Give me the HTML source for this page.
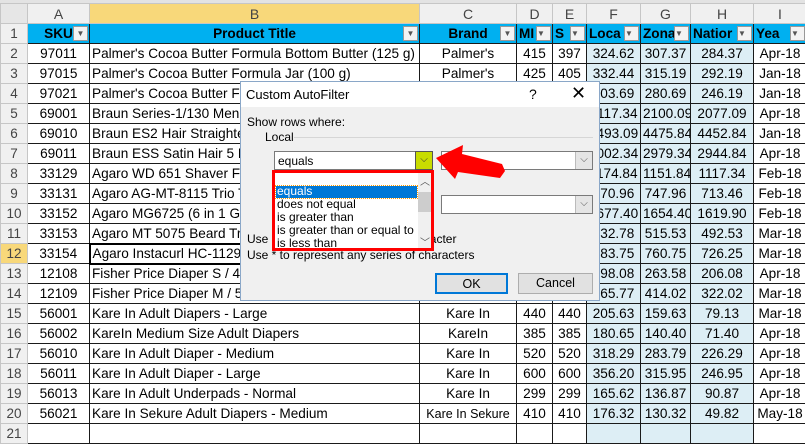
<!DOCTYPE html>
<html><head><meta charset="utf-8"><style>
*{margin:0;padding:0;box-sizing:border-box}
body{width:805px;height:425px;overflow:hidden;background:#fff;font-family:"Liberation Sans",sans-serif;position:relative}
table{border-collapse:collapse;table-layout:fixed;position:absolute;left:0;top:3px;width:806px}
td{height:20px;border:1px solid #1a1a1a;font-size:13.6px;text-align:center;white-space:nowrap;overflow:hidden;padding:0 2px;color:#000}
tr.ch td{height:20px;background:#f0f0f0;border:1px solid #c6c6c6;color:#444;font-size:14px}
td.rh{background:#f0f0f0;border:1px solid #c6c6c6;color:#444;font-size:13.5px}
td.rhs{background:#f8d87a}
tr.h td{background:#00b0f0;font-weight:bold;position:relative}
tr.h td.rh{background:#f0f0f0;font-weight:normal}
.f{background:#ddeef5}
td.l{text-align:left}
.dd{position:absolute;right:1px;top:2px;width:15px;height:15px;background:#f3f3f3;border:1px solid #999;font-size:8px;line-height:13px;color:#555;font-weight:normal}
.dlg{position:absolute;left:240px;top:81px;width:360px;height:220px;background:#f0f0f0;border:1px solid #8aa7c8;font-size:12px;color:#000}
.tb{height:25px;background:#fff;position:relative}
.ab{position:absolute}
.cb{position:absolute;background:#fff;border:1px solid #7a7a7a;height:19px}
.cbb{position:absolute;right:0;top:0;width:17px;height:17px;border-left:1px solid #bbb;background:#e5e5e5;font-size:10px;color:#555;text-align:center;line-height:16px}
.btn{position:absolute;height:21px;background:#e1e1e1;border:1px solid #adadad;text-align:center;line-height:19px;font-size:12.5px}
</style></head><body>
<div style="position:absolute;left:0;top:0;width:805px;height:3px;background:#e3e3e3"></div>
<table>
<colgroup><col style="width:27px"><col style="width:62px"><col style="width:330px"><col style="width:97px"><col style="width:36px"><col style="width:34px"><col style="width:54px"><col style="width:50px"><col style="width:63px"><col style="width:53px"></colgroup>
<tr class="ch"><td style="background:#e6e6e6"></td><td>A</td><td style="background:#f8d87a">B</td><td>C</td><td>D</td><td>E</td><td>F</td><td>G</td><td>H</td><td>I</td></tr>
<tr class="h"><td class="rh">1</td><td>SKU<span class="dd">▼</span></td><td>Product Title<span class="dd">▼</span></td><td>Brand<span class="dd">▼</span></td><td class="l">MI<span class="dd">▼</span></td><td class="l">S<span class="dd">▼</span></td><td class="l">Loca<span class="dd">▼</span></td><td class="l">Zona<span class="dd">▼</span></td><td class="l">Natior<span class="dd">▼</span></td><td class="l">Yea<span class="dd">▼</span></td></tr>
<tr><td class="rh">2</td><td>97011</td><td class="l">Palmer's Cocoa Butter Formula Bottom Butter (125 g)</td><td>Palmer's</td><td>415</td><td>397</td><td class="f">324.62</td><td class="f">307.37</td><td class="f">284.37</td><td>Apr-18</td></tr>
<tr><td class="rh">3</td><td>97015</td><td class="l">Palmer's Cocoa Butter Formula Jar (100 g)</td><td>Palmer's</td><td>425</td><td>405</td><td class="f">332.44</td><td class="f">315.19</td><td class="f">292.19</td><td>Jan-18</td></tr>
<tr><td class="rh">4</td><td>97021</td><td class="l">Palmer's Cocoa Butter Formula Lotion</td><td>Palmer's</td><td>350</td><td>330</td><td class="f">303.69</td><td class="f">280.69</td><td class="f">246.19</td><td>Jan-18</td></tr>
<tr><td class="rh">5</td><td>69001</td><td class="l">Braun Series-1/130 Men's Shaver</td><td>Braun</td><td>2200</td><td>2150</td><td class="f">2117.34</td><td class="f">2100.09</td><td class="f">2077.09</td><td>Apr-18</td></tr>
<tr><td class="rh">6</td><td>69010</td><td class="l">Braun ES2 Hair Straightener</td><td>Braun</td><td>4600</td><td>4550</td><td class="f">4493.09</td><td class="f">4475.84</td><td class="f">4452.84</td><td>Jan-18</td></tr>
<tr><td class="rh">7</td><td>69011</td><td class="l">Braun ESS Satin Hair 5 Hair Dryer</td><td>Braun</td><td>3100</td><td>3050</td><td class="f">3002.34</td><td class="f">2979.34</td><td class="f">2944.84</td><td>Apr-18</td></tr>
<tr><td class="rh">8</td><td>33129</td><td class="l">Agaro WD 651 Shaver For Men</td><td>Agaro</td><td>1200</td><td>1190</td><td class="f">1174.84</td><td class="f">1151.84</td><td class="f">1117.34</td><td>Feb-18</td></tr>
<tr><td class="rh">9</td><td>33131</td><td class="l">Agaro AG-MT-8115 Trio Trimmer</td><td>Agaro</td><td>800</td><td>790</td><td class="f">770.96</td><td class="f">747.96</td><td class="f">713.46</td><td>Feb-18</td></tr>
<tr><td class="rh">10</td><td>33152</td><td class="l">Agaro MG6725 (6 in 1 Grooming Kit)</td><td>Agaro</td><td>1700</td><td>1690</td><td class="f">1677.40</td><td class="f">1654.40</td><td class="f">1619.90</td><td>Feb-18</td></tr>
<tr><td class="rh">11</td><td>33153</td><td class="l">Agaro MT 5075 Beard Trimmer</td><td>Agaro</td><td>560</td><td>550</td><td class="f">532.78</td><td class="f">515.53</td><td class="f">492.53</td><td>Mar-18</td></tr>
<tr><td class="rh rhs">12</td><td>33154</td><td class="l" style="border:2px solid #000">Agaro Instacurl HC-1129</td><td>Agaro</td><td>800</td><td>790</td><td class="f">783.75</td><td class="f">760.75</td><td class="f">726.25</td><td>Mar-18</td></tr>
<tr><td class="rh">13</td><td>12108</td><td class="l">Fisher Price Diaper S / 40</td><td>Fisher Price</td><td>320</td><td>310</td><td class="f">298.08</td><td class="f">263.58</td><td class="f">206.08</td><td>Apr-18</td></tr>
<tr><td class="rh">14</td><td>12109</td><td class="l">Fisher Price Diaper M / 50</td><td>Fisher Price</td><td>480</td><td>470</td><td class="f">465.77</td><td class="f">414.02</td><td class="f">322.02</td><td>Mar-18</td></tr>
<tr><td class="rh">15</td><td>56001</td><td class="l">Kare In Adult Diapers - Large</td><td>Kare In</td><td>440</td><td>440</td><td class="f">205.63</td><td class="f">159.63</td><td class="f">79.13</td><td>Mar-18</td></tr>
<tr><td class="rh">16</td><td>56002</td><td class="l">KareIn Medium Size Adult Diapers</td><td>KareIn</td><td>385</td><td>385</td><td class="f">180.65</td><td class="f">140.40</td><td class="f">71.40</td><td>Apr-18</td></tr>
<tr><td class="rh">17</td><td>56010</td><td class="l">Kare In Adult Diaper - Medium</td><td>Kare In</td><td>520</td><td>520</td><td class="f">318.29</td><td class="f">283.79</td><td class="f">226.29</td><td>Apr-18</td></tr>
<tr><td class="rh">18</td><td>56011</td><td class="l">Kare In Adult Diaper - Large</td><td>Kare In</td><td>600</td><td>600</td><td class="f">356.20</td><td class="f">315.95</td><td class="f">246.95</td><td>Apr-18</td></tr>
<tr><td class="rh">19</td><td>56013</td><td class="l">Kare In Adult Underpads - Normal</td><td>Kare In</td><td>299</td><td>299</td><td class="f">165.62</td><td class="f">136.87</td><td class="f">90.87</td><td>Apr-18</td></tr>
<tr><td class="rh">20</td><td>56021</td><td class="l">Kare In Sekure Adult Diapers - Medium</td><td style="font-size:12.5px">Kare In Sekure</td><td>410</td><td>410</td><td class="f">176.32</td><td class="f">130.32</td><td class="f">49.82</td><td>May-18</td></tr>
<tr><td class="rh">21</td><td></td><td></td><td></td><td></td><td></td><td class="f"></td><td class="f"></td><td class="f"></td><td></td></tr>
</table>

<div class="dlg">
 <div class="tb"><span class="ab" style="left:5px;top:5px;font-size:13px">Custom AutoFilter</span><span class="ab" style="left:288px;top:4px;font-size:14px">?</span><span class="ab" style="left:330px;top:1px;font-size:18px;font-weight:300">✕</span></div>
 <span class="ab" style="left:6px;top:33px">Show rows where:</span>
 <span class="ab" style="left:24px;top:48px">Local</span>
 <div class="ab" style="left:53px;top:55px;width:299px;height:1px;background:#d6d6d6"></div>
 <div class="cb" style="left:33px;top:69px;width:159px"><span class="ab" style="left:3px;top:2px">equals</span><div class="cbb" style="background:#c8dc00;border:1px solid #555;top:-1px;right:-1px;width:18px;height:19px;color:#333">⌵</div></div>
 <div class="cb" style="left:200px;top:69px;width:152px"><div class="cbb">⌵</div></div>
 <div class="cb" style="left:200px;top:113px;width:152px"><div class="cbb">⌵</div></div>
 <span class="ab" style="left:6px;top:150px">Use ? to represent any single character</span>
 <span class="ab" style="left:6px;top:166px">Use * to represent any series of characters</span>
 <div class="ab" style="left:31px;top:88px;width:162px;height:81px;border:3px solid #f00;background:#fff">
  <div class="ab" style="left:143px;top:0;width:13px;height:75px;background:#f0f0f0"></div>
  <div class="ab" style="left:143px;top:19px;width:13px;height:20px;background:#cdcdcd"></div>
  <span class="ab" style="left:145px;top:0;font-size:10px;color:#555">︿</span>
  <span class="ab" style="left:145px;top:61px;font-size:10px;color:#555">﹀</span>
  <div class="ab" style="left:1px;top:13px;width:141px;height:12px;background:#0078d7;outline:1px dotted #f90"></div>
  <div class="ab" style="left:2px;top:12px;line-height:13px;font-size:12px"><span style="color:#fff">equals</span><br>does not equal<br>is greater than<br>is greater than or equal to<br>is less than</div>
 </div>
 <div class="btn" style="left:194px;top:191px;width:73px;border:2px solid #0078d7">OK</div>
 <div class="btn" style="left:277px;top:191px;width:75px">Cancel</div>
</div>
<svg class="ab" style="left:0;top:0" width="805" height="425"><polygon points="436,158 463,145 462,154 502,164 505,171 500,178 458,172 455,179" fill="#f00"/></svg>
</body></html>
